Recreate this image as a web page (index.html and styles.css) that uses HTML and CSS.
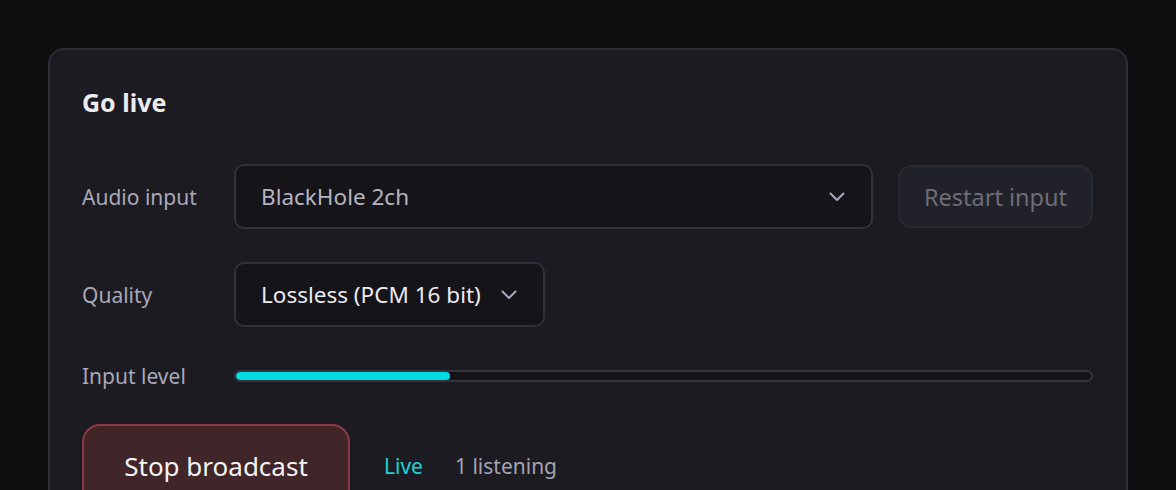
FILE: index.html
```html
<!DOCTYPE html>
<html>
<head>
<meta charset="utf-8">
<link rel="stylesheet" href="styles.css">
</head>
<body>
<section class="card">
  <h2 class="title">Go live</h2>
  <div class="row">
    <span class="label">Audio input</span>
    <div class="select select-wide">
      <span class="value muted">BlackHole 2ch</span>
      <svg class="chev" width="16" height="10" viewBox="0 0 16 10"><path d="M1.5 1.5 L8 8 L14.5 1.5" fill="none" stroke="currentColor" stroke-width="2" stroke-linecap="round" stroke-linejoin="round"/></svg>
    </div>
    <button class="btn-restart">Restart input</button>
  </div>
  <div class="row row-quality">
    <span class="label">Quality</span>
    <div class="select select-auto">
      <span class="value">Lossless (PCM 16 bit)</span>
      <svg class="chev" width="16" height="10" viewBox="0 0 16 10"><path d="M1.5 1.5 L8 8 L14.5 1.5" fill="none" stroke="currentColor" stroke-width="2" stroke-linecap="round" stroke-linejoin="round"/></svg>
    </div>
  </div>
  <div class="row row-level">
    <span class="label">Input level</span>
    <div class="meter"><div class="meter-fill" style="width:25%"></div></div>
  </div>
  <div class="row row-actions">
    <button class="btn-stop">Stop broadcast</button>
    <span class="live">Live</span>
    <span class="listeners">1 listening</span>
  </div>
</section>
</body>
</html>
```
FILE: styles.css
```css
html, body {
  margin: 0;
  padding: 0;
  background: #0f0f12;
  font-family: "Noto Sans", "Open Sans", sans-serif;
}
body {
  padding: 48px 48px 0 48px;
  height: 490px;
  box-sizing: border-box;
  overflow: hidden;
}
.card {
  box-sizing: border-box;
  width: 1080px;
  background: #1c1b21;
  border: 2px solid #2e2d37;
  border-radius: 16px;
  padding: 32px 33px 40px 32px;
}
.title {
  margin: 0 0 42px 0;
  font-size: 25px;
  line-height: 40px;
  font-weight: 700;
  color: #ecebf1;
}
.row {
  display: flex;
  align-items: center;
  margin-bottom: 33px;
}
.row-quality {
  margin-bottom: 35px;
}
.label {
  width: 152px;
  flex: none;
  font-size: 21px;
  color: #a9a8b8;
}
.select {
  box-sizing: border-box;
  height: 65px;
  display: flex;
  align-items: center;
  background: #151419;
  border: 2px solid #32313b;
  border-radius: 10px;
  padding: 0 26px 0 25px;
  font-size: 22.5px;
}
.select-wide {
  width: 639px;
  justify-content: space-between;
}
.select-auto {
  width: 311px;
  justify-content: space-between;
}
.value {
  color: #ebeaf0;
}
.value.muted {
  color: #b5b4c1;
}
.chev {
  color: #a9a8c2;
  flex: none;
}
.btn-restart {
  box-sizing: border-box;
  margin-left: 25px;
  width: 195px;
  height: 63px;
  background: #212129;
  border: 2px solid #292931;
  border-radius: 14px;
  color: #6d6c79;
  font-family: inherit;
  font-size: 23.5px;
  padding: 0;
}
.row-level {
  margin-bottom: 34px;
}
.meter {
  box-sizing: border-box;
  width: 860px;
  height: 12px;
  border: 2px solid #33323d;
  border-radius: 6px;
  background: #141318;
  overflow: hidden;
}
.meter-fill {
  height: 100%;
  background: #00d9dd;
  border-radius: 4px;
}
.row-actions {
  margin-bottom: 0;
}
.btn-stop {
  box-sizing: border-box;
  width: 268px;
  height: 84px;
  background: #412629;
  border: 2px solid #8b3a40;
  border-radius: 18px;
  color: #f4f3f5;
  font-family: inherit;
  font-size: 26px;
  padding: 0;
}
.live {
  margin-left: 34px;
  color: #19d4d8;
  font-size: 21px;
}
.listeners {
  margin-left: 32px;
  color: #a3a2b3;
  font-size: 21px;
}
```
